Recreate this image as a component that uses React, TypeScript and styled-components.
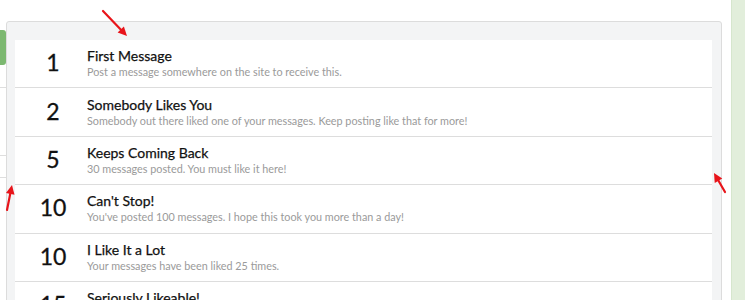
import React from "react";
import styled, { createGlobalStyle } from "styled-components";

const GlobalStyle = createGlobalStyle`
  html, body {
    margin: 0;
    padding: 0;
    background: #fff;
    height: 300px;
    overflow: hidden;
  }
  body {
    font-family: Lato, "Noto Sans", "Liberation Sans", sans-serif;
  }
`;

const Page = styled.div`
  position: relative;
  display: flex;
  align-items: flex-start;
  width: 745px;
  height: 300px;
  overflow: hidden;
`;

const SideEdge = styled.div`
  width: 6px;
  flex: none;
  display: flex;
  flex-direction: column;
  padding-top: 30px;
`;

const GreenButton = styled.div`
  height: 35px;
  background: #7cb870;
  border-radius: 0 3px 3px 0;
`;

const SideLine = styled.div<{ $gap: number }>`
  margin-top: ${(p) => p.$gap}px;
  height: 1px;
  background: #dedede;
`;

const Panel = styled.div`
  margin-top: 21px;
  width: 716px;
  box-sizing: border-box;
  flex: none;
  background: #f3f4f5;
  border: 1px solid #dcdcdc;
  border-radius: 3px;
  padding: 18px 9px 0 8px;
  height: 300px;
`;

const List = styled.div`
  background: #fff;
  display: flex;
  flex-direction: column;
`;

const Row = styled.div`
  display: grid;
  grid-template-columns: 64px 1fr;
  column-gap: 2px;
  align-items: center;
  height: 47.4px;
  padding-left: 6px;
  border-bottom: 1px solid #dddddd;
`;

const Count = styled.div`
  text-align: center;
  font-size: 23px;
  color: #111;
  margin-top: -3px;
  -webkit-text-stroke: 0.3px #111;
`;

const Text = styled.div`
  display: flex;
  flex-direction: column;
`;

const Title = styled.div`
  font-size: 14px;
  color: #111;
  line-height: 16px;
  -webkit-text-stroke: 0.25px #111;
`;

const Desc = styled.div`
  font-size: 10.8px;
  color: #9a9a9a;
  line-height: 14px;
  margin-top: 1px;
`;

const RightStrip = styled.div`
  margin-left: 9px;
  flex: 1;
  height: 300px;
  background: #e2eedb;
  border-left: 1px solid #d6e6cd;
`;

const Marks = styled.svg`
  position: absolute;
  left: 0;
  top: 0;
  pointer-events: none;
`;

const trophies = [
  { points: 1, title: "First Message", text: "Post a message somewhere on the site to receive this." },
  { points: 2, title: "Somebody Likes You", text: "Somebody out there liked one of your messages. Keep posting like that for more!" },
  { points: 5, title: "Keeps Coming Back", text: "30 messages posted. You must like it here!" },
  { points: 10, title: "Can't Stop!", text: "You've posted 100 messages. I hope this took you more than a day!" },
  { points: 10, title: "I Like It a Lot", text: "Your messages have been liked 25 times." },
  { points: 15, title: "Seriously Likeable!", text: "Your messages have been liked 100 times." },
];

// red annotation arrow: tail -> tip
function Arrow({ x1, y1, x2, y2 }: { x1: number; y1: number; x2: number; y2: number }) {
  const a = Math.atan2(y2 - y1, x2 - x1);
  const len = 10;
  const w = 0.45;
  const p1 = [x2 - len * Math.cos(a - w), y2 - len * Math.sin(a - w)];
  const p2 = [x2 - len * Math.cos(a + w), y2 - len * Math.sin(a + w)];
  const bx = x2 - 7 * Math.cos(a);
  const by = y2 - 7 * Math.sin(a);
  return (
    <g>
      <line x1={x1} y1={y1} x2={bx} y2={by} stroke="#e8141a" strokeWidth={2.2} strokeLinecap="round" />
      <polygon points={`${x2},${y2} ${p1[0]},${p1[1]} ${p2[0]},${p2[1]}`} fill="#e8141a" />
    </g>
  );
}

export default function App() {
  return (
    <>
      <GlobalStyle />
      <Page>
        <SideEdge>
          <GreenButton />
          <SideLine $gap={22} />
          <SideLine $gap={67} />
          <SideLine $gap={21} />
        </SideEdge>
        <Panel>
          <List>
            {trophies.map((t, i) => (
              <Row key={i}>
                <Count>{t.points}</Count>
                <Text>
                  <Title>{t.title}</Title>
                  <Desc>{t.text}</Desc>
                </Text>
              </Row>
            ))}
          </List>
        </Panel>
        <RightStrip />
        <Marks width={745} height={300}>
          <Arrow x1={103} y1={11} x2={127} y2={36} />
          <Arrow x1={7} y1={210} x2={12} y2={185} />
          <Arrow x1={725} y1={192} x2={714} y2={173} />
        </Marks>
      </Page>
    </>
  );
}
